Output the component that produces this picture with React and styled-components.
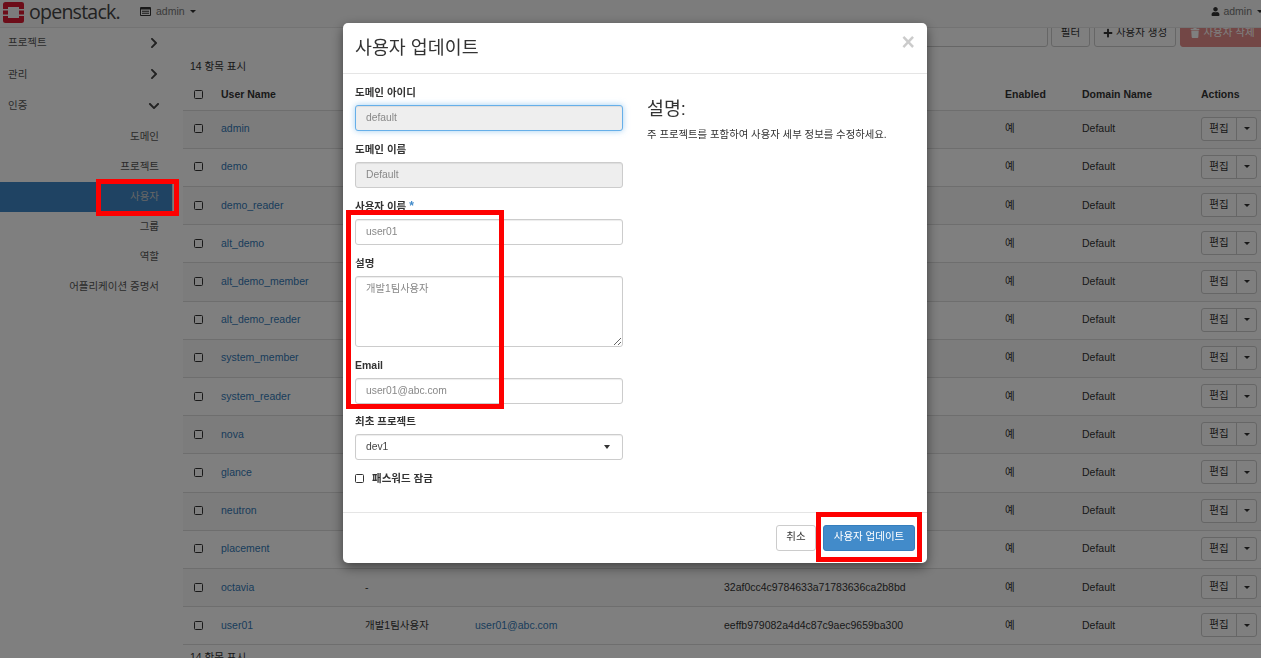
import React from 'react';
import styled, { createGlobalStyle } from 'styled-components';
import { FaChevronRight, FaChevronDown, FaUser, FaPlus, FaTrash } from 'react-icons/fa';

const Global = createGlobalStyle`
  html, body { margin: 0; padding: 0; height: 100%; overflow: hidden; background: #fff; }
  body { font: 10.5px/1.43 "Liberation Sans", "Noto Sans CJK KR", sans-serif; color: #333; }
  * { box-sizing: border-box; }
`;

const Page = styled.div`
  width: 1261px; height: 658px; overflow: hidden; display: flex; flex-direction: column;
`;
const NavBar = styled.header`
  height: 28px; flex: none; display: flex; align-items: center; background: #f8f8f8;
  border-bottom: 1px solid #e7e7e7; padding: 0 0 0 3px;
`;
const Logo = styled.svg`width: 21px; height: 21px; flex: none; margin-top: -3px;`;
const Brand = styled.span`
  font: 500 19.6px/1 "Open Sans", sans-serif; color: #444; letter-spacing: -0.8px;
  margin: -3px 0 0 5px; width: 111px; flex: none;
`;
const NavMenu = styled.div`
  display: flex; align-items: center; gap: 5px; color: #777; font-size: 10.5px; margin-top: -4px;
  margin-left: ${p => p.$right ? 'auto' : '0'};
  margin-right: ${p => p.$right ? '-2px' : '0'};
  svg { color: #333; margin-right: ${p => p.$right ? '-2px' : '0'}; }
`;
const Caret = styled.i`
  display: inline-block; width: 0; height: 0; border-left: 3px solid transparent; border-right: 3px solid transparent;
  border-top: 3px solid ${p => p.$color || '#333'};
`;
const Body = styled.div`flex: 1; display: flex; min-height: 0;`;
const Sidebar = styled.nav`width: 183px; flex: none; margin-top: -1px;`;
const SideHead = styled.div`
  height: 31.5px; display: flex; justify-content: space-between; align-items: center;
  padding: 0 24px 0 8px; color: #555; font-size: 10.5px;
  svg { width: 12px; height: 12px; color: #444; margin-right: -1px; }
`;
const SideItem = styled.div`
  height: 30px; width: 173px; display: flex; justify-content: flex-end; align-items: center; padding-right: 13px;
  color: ${p => p.$active ? '#ccc' : '#555'};
  background: ${p => p.$active ? '#3f87c6' : 'transparent'};
  border-right: 1px solid ${p => p.$active ? '#ddd' : 'transparent'};
`;
const Main = styled.main`flex: 1; min-width: 0;`;
const Toolbar = styled.div`
  height: 19px; overflow: hidden; display: flex; justify-content: flex-end; align-items: flex-end; gap: 4px;
`;
const ToolInput = styled.div`
  flex: none; width: 200px; height: 27px; border: 1px solid #ccc; border-radius: 3px; background: #fff; margin-right: -1px;
`;
const ToolBtn = styled.div`
  flex: none; height: 27px; padding-bottom: 2px; display: flex; align-items: center; justify-content: center; gap: 3px;
  border: 1px solid ${p => p.$danger ? '#d9534f' : '#ccc'}; border-radius: 3px;
  background: ${p => p.$danger ? '#d9534f' : '#fff'}; color: ${p => p.$danger ? '#fff' : '#333'};
  opacity: ${p => p.$danger ? 0.65 : 1}; width: ${p => p.$w}px; margin-right: ${p => p.$mr || 0}px;
  svg { width: 10px; height: 10px; }
`;
const Count = styled.div`padding: 12px 0 0 7px; height: 33.7px; color: #333;`;
const Grid = styled.div`
  display: grid; grid-template-columns: 38px 144px 110px 249px 281px 77px 119px 60px; align-items: center;
  height: ${p => p.$head ? '30px' : '38.2px'};
  border-bottom: 1px solid #ddd;
  background: ${p => p.$odd ? '#f9f9f9' : 'transparent'};
  font-weight: ${p => p.$head ? 700 : 400};
  padding-bottom: 1px;
`;
const CheckCell = styled.span`display: flex; padding-left: 11px;`;
const Box = styled.i`
  display: block; width: 9px; height: 9px; border: 1px solid #333; border-radius: 1.5px; background: #fff; flex: none;
`;
const Link = styled.span`color: #337ab7;`;
const Actions = styled.div`
  display: flex; width: 56px; height: 24px; border: 1px solid #ccc; border-radius: 3px; background: #fff;
`;
const ActEdit = styled.span`
  width: 35px; display: flex; align-items: center; justify-content: center; border-right: 1px solid #ccc; padding-bottom: 1px;
`;
const ActCaret = styled.span`flex: 1; display: flex; align-items: center; justify-content: center;`;
const Foot = styled.div`padding: 5px 0 0 7px;`;

const Backdrop = styled.div`position: fixed; inset: 0; background: rgba(0,0,0,.5); z-index: 10;`;
const Modal = styled.section`
  position: fixed; left: 343px; top: 23px; width: 584px; height: 540px; background: #fff; border-radius: 5px; z-index: 20;
  box-shadow: 0 4px 12px rgba(0,0,0,.5); display: flex; flex-direction: column;
`;
const ModalHead = styled.div`
  height: 51px; flex: none; border-bottom: 1px solid #e5e5e5; display: flex; justify-content: space-between; align-items: center;
  padding: 0 12px;
`;
const Title = styled.h4`margin: 0; font-size: 18.4px; font-weight: 400; line-height: 1.2; color: #333;`;
const Close = styled.span`
  font: 700 23px/1 "Liberation Sans", sans-serif; color: #000; opacity: .2; margin-top: -11px; margin-right: 0;
`;
const ModalBody = styled.div`flex: 1; display: flex; gap: 24px; padding: 11px 12px 0;`;
const FormCol = styled.div`width: 268px; flex: none;`;
const Field = styled.div`margin-bottom: ${p => p.$mb ?? 11}px;`;
const Label = styled.label`
  display: block; font-weight: 700; height: 14px; line-height: 14px; margin-bottom: 6px; color: #333;
  b { color: #428bca; font-size: 12px; }
`;
const inputCss = `
  display: block; width: 100%; height: 26px; padding: 0 10px 2px; border: 1px solid #ccc; border-radius: 3px; outline: 0;
  font: 10.3px "Liberation Sans", "Noto Sans CJK KR", sans-serif; color: #555; background: #fff;
  box-shadow: inset 0 1px 1px rgba(0,0,0,.075);
  &::placeholder { color: #888; opacity: 1; }
  &:disabled { background: #eee; color: #777; -webkit-text-fill-color: #888; opacity: 1; }
`;
const Input = styled.input`
  ${inputCss}
  ${p => p.$focus ? 'border-color: #66afe9; box-shadow: inset 0 1px 1px rgba(0,0,0,.075), 0 0 6px rgba(102,175,233,.6);' : ''}
`;
const TextArea = styled.textarea`${inputCss} height: 71px; padding: 3px 10px; resize: vertical;`;
const SelectWrap = styled.div`
  position: relative;
  &::after { content: ''; position: absolute; right: 13px; top: 11px; border-left: 3.5px solid transparent; border-right: 3.5px solid transparent; border-top: 4px solid #333; }
`;
const Select = styled.select`${inputCss} appearance: none; color: #444;`;
const CheckRow = styled.label`display: flex; align-items: center; gap: 8px; font-weight: 700; margin-top: -1px;`;
const Help = styled.div`padding-top: 13px;`;
const HelpTitle = styled.h3`margin: 0 0 8px; font-size: 18.4px; font-weight: 400; line-height: 1.2; color: #333;`;
const HelpText = styled.p`margin: 0; color: #333; font-size: 10.38px;`;
const ModalFoot = styled.div`
  height: 51px; flex: none; border-top: 1px solid #e5e5e5; display: flex; justify-content: flex-end; align-items: center; gap: 7px;
  padding: 0 12px 1px;
`;
const Cancel = styled.div`
  width: 40px; height: 26px; padding-bottom: 2px; border: 1px solid #ccc; border-radius: 3px; display: flex; align-items: center; justify-content: center; color: #333;
`;
const Submit = styled.div`
  width: 92px; height: 26px; padding-bottom: 2px; border: 1px solid #357ebd; border-radius: 3px; background: #428bca; color: #fff;
  display: flex; align-items: center; justify-content: center;
`;
const RedBox = styled.div`
  position: fixed; z-index: 30; border: ${p => p.$b || 5}px solid #fe0000; pointer-events: none;
  left: ${p => p.$x}px; top: ${p => p.$y}px; width: ${p => p.$w}px; height: ${p => p.$h}px;
`;

const rows = [
  ['admin'], ['demo'], ['demo_reader'], ['alt_demo'], ['alt_demo_member'], ['alt_demo_reader'],
  ['system_member'], ['system_reader'], ['nova'], ['glance'], ['neutron'], ['placement'],
  ['octavia', '-', '', '32af0cc4c9784633a71783636ca2b8bd'],
  ['user01', '개발1팀사용자', 'user01@abc.com', 'eeffb979082a4d4c87c9aec9659ba300'],
];

function OpenStackLogo() {
  return (
    <Logo viewBox="0 0 21 21" aria-hidden="true">
      <path fill="#da1a32" fillRule="evenodd" d="M2.5 0h16A2.5 2.5 0 0 1 21 2.5V7h-5V5H5v2H0V2.5A2.5 2.5 0 0 1 2.5 0ZM0 14h5v2h11v-2h5v4.500A2.500 2.500 0 0 1 18.500 21h-16A2.500 2.500 0 0 1 0 18.500ZM0 8.500h5v4H0ZM16 8.500h5v4h-5Z" />
    </Logo>
  );
}

function ProjectIcon() {
  return (
    <svg width="11" height="9" viewBox="0 0 11 9" aria-hidden="true">
      <path fill="currentColor" fillRule="evenodd" d="M1 0h9a1 1 0 0 1 1 1v7a1 1 0 0 1-1 1H1a1 1 0 0 1-1-1V1a1 1 0 0 1 1-1Zm0 2.500V8h9V2.500ZM2 3.800h7v1H2Zm0 2h7v1H2Z" />
    </svg>
  );
}

export default function App() {
  return (
    <Page>
      <Global />
      <NavBar>
        <OpenStackLogo />
        <Brand>openstack.</Brand>
        <NavMenu><ProjectIcon />admin<Caret /></NavMenu>
        <NavMenu $right><FaUser size={9} />admin<Caret /></NavMenu>
      </NavBar>
      <Body>
        <Sidebar>
          <SideHead>프로젝트<FaChevronRight /></SideHead>
          <SideHead>관리<FaChevronRight /></SideHead>
          <SideHead>인증<FaChevronDown /></SideHead>
          <SideItem>도메인</SideItem>
          <SideItem>프로젝트</SideItem>
          <SideItem $active>사용자</SideItem>
          <SideItem>그룹</SideItem>
          <SideItem>역할</SideItem>
          <SideItem>어플리케이션 증명서</SideItem>
        </Sidebar>
        <Main>
          <Toolbar>
            <ToolInput />
            <ToolBtn $w={39}>필터</ToolBtn>
            <ToolBtn $w={82}><FaPlus />사용자 생성</ToolBtn>
            <ToolBtn $w={85} $danger $mr={-4}><FaTrash />사용자 삭제</ToolBtn>
          </Toolbar>
          <Count>14 항목 표시</Count>
          <Grid $head>
            <CheckCell><Box /></CheckCell>
            <span>User Name</span><span>Description</span><span>Email</span><span>User ID</span>
            <span>Enabled</span><span>Domain Name</span><span>Actions</span>
          </Grid>
          {rows.map(([name, desc = '-', mail = '', id = ''], i) => (
            <Grid key={name} $odd={i % 2 === 0}>
              <CheckCell><Box /></CheckCell>
              <Link>{name}</Link>
              <span>{desc}</span>
              <Link>{mail}</Link>
              <span>{id}</span>
              <span>예</span>
              <span>Default</span>
              <Actions><ActEdit>편집</ActEdit><ActCaret><Caret $color="#333" /></ActCaret></Actions>
            </Grid>
          ))}
          <Foot>14 항목 표시</Foot>
        </Main>
      </Body>

      <Backdrop />
      <Modal>
        <ModalHead>
          <Title>사용자 업데이트</Title>
          <Close>×</Close>
        </ModalHead>
        <ModalBody>
          <FormCol>
            <Field><Label>도메인 아이디</Label><Input $focus disabled value="default" readOnly /></Field>
            <Field><Label>도메인 이름</Label><Input disabled value="Default" readOnly /></Field>
            <Field><Label>사용자 이름 <b>*</b></Label><Input placeholder="user01" /></Field>
            <Field><Label>설명</Label><TextArea placeholder="개발1팀사용자" /></Field>
            <Field $mb={10}><Label>Email</Label><Input placeholder="user01@abc.com" /></Field>
            <Field $mb={12}><Label>최초 프로젝트</Label>
              <SelectWrap><Select defaultValue="dev1"><option>dev1</option></Select></SelectWrap>
            </Field>
            <CheckRow><Box />패스워드 잠금</CheckRow>
          </FormCol>
          <Help>
            <HelpTitle>설명:</HelpTitle>
            <HelpText>주 프로젝트를 포함하여 사용자 세부 정보를 수정하세요.</HelpText>
          </Help>
        </ModalBody>
        <ModalFoot>
          <Cancel>취소</Cancel>
          <Submit>사용자 업데이트</Submit>
        </ModalFoot>
      </Modal>
      <RedBox $x={96} $y={179} $w={83} $h={37} />
      <RedBox $x={346} $y={210} $w={158} $h={199} />
      <RedBox $x={816} $y={512} $w={106} $h={50} />
    </Page>
  );
}
